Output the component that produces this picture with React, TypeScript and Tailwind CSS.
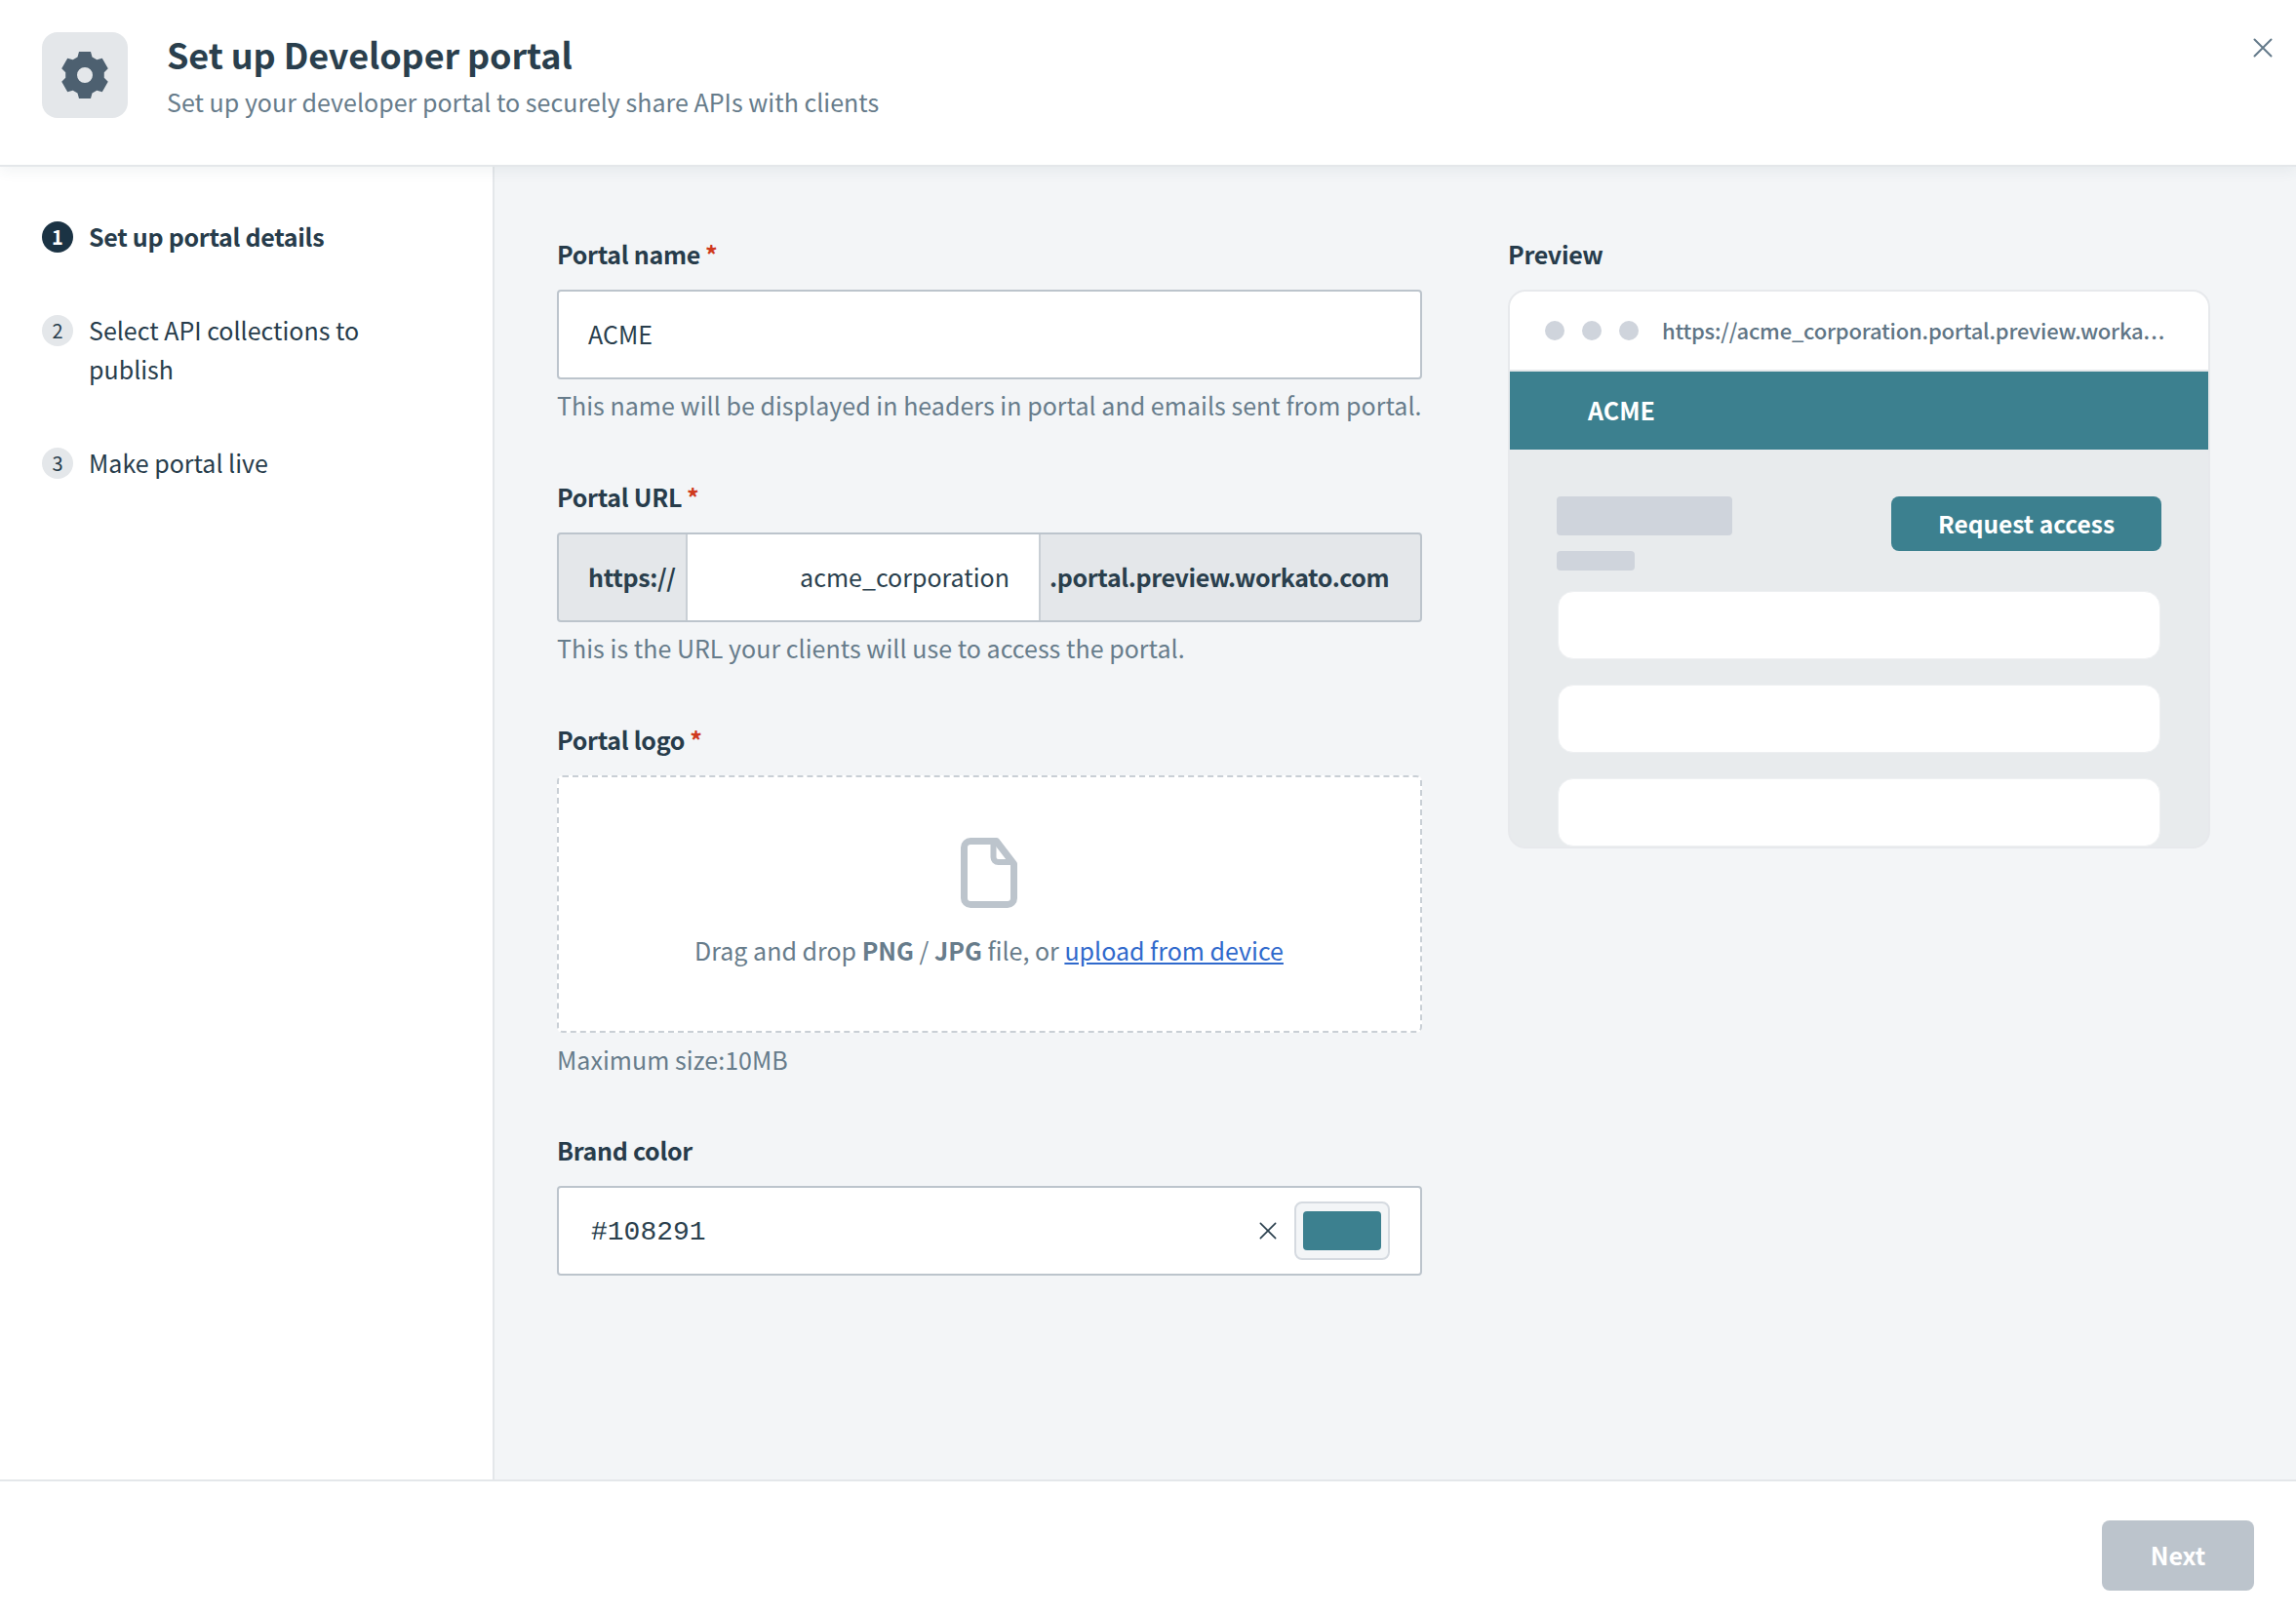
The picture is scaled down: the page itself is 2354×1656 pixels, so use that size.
import React from "react";

function gearPath(cx: number, cy: number) {
  const pts: string[] = [];
  const R = 24;
  const r = 18.5;
  for (let i = 0; i < 6; i++) {
    const a = (-90 + i * 60) * (Math.PI / 180);
    const at = (rad: number, off: number) => {
      const x = cx + rad * Math.cos(a) - off * Math.sin(a);
      const y = cy + rad * Math.sin(a) + off * Math.cos(a);
      return `${x.toFixed(2)} ${y.toFixed(2)}`;
    };
    pts.push(at(r, -7.5), at(R, -6), at(R, 6), at(r, 7.5));
  }
  return `M${pts.join("L")}Z`;
}

function Label({ text, required, className = "" }: { text: string; required?: boolean; className?: string }) {
  return (
    <div className={`h-[40px] leading-[40px] text-[25px] font-semibold tracking-[-0.3px] text-[#273c4b] ${className}`}>
      {text}
      {required && <span className="text-[#cf3a1d] ml-[5px]">*</span>}
    </div>
  );
}

function Hint({ children, className = "" }: { children: React.ReactNode; className?: string }) {
  return <div className={`h-[40px] leading-[40px] text-[25px] tracking-[0.03px] text-[#677c8b] whitespace-nowrap ${className}`}>{children}</div>;
}

function Step({ n, active, children, className = "" }: { n: number; active?: boolean; children: React.ReactNode; className?: string }) {
  return (
    <div className={`flex gap-[16px] ${className}`}>
      <div
        className={`mt-[5px] w-[32px] h-[32px] shrink-0 rounded-full flex items-center justify-center text-[20px] leading-none ${
          active ? "bg-[#1b3344] text-white font-semibold" : "bg-[#e4e7ea] text-[#273c4b]"
        }`}
      >
        {n}
      </div>
      <div className={`text-[25px] leading-[40px] text-[#273c4b] w-[330px] ${active ? "font-semibold tracking-[-0.3px]" : ""}`}>{children}</div>
    </div>
  );
}

function XIcon({ size, color, width }: { size: number; color: string; width: number }) {
  return (
    <svg width={size} height={size} viewBox="0 0 20 20" fill="none" stroke={color} strokeWidth={width} strokeLinecap="round">
      <path d="M1.5 1.5L18.5 18.5M18.5 1.5L1.5 18.5" />
    </svg>
  );
}

export default function App() {
  return (
    <div className="w-[2354px] h-[1656px] flex flex-col bg-white overflow-hidden font-['Noto_Sans_CJK_SC','Noto_Sans',sans-serif] text-[#273c4b]">
      <header className="relative z-10 h-[171px] shrink-0 flex items-start bg-white border-b-2 border-[#e4e7ea] shadow-[0_4px_14px_rgba(60,80,100,0.07)] pl-[43px] pt-[33px]">
        <div className="w-[88px] h-[88px] rounded-[16px] bg-[#e4e7ea] flex items-center justify-center">
          <svg width="48" height="48" viewBox="0 0 48 48">
            <path d={gearPath(24, 24) + "M24 16a8 8 0 1 0 0 16a8 8 0 1 0 0-16Z"} fill="#4d6070" fillRule="evenodd" />
          </svg>
        </div>
        <div className="ml-[40px] -mt-[5px]">
          <div className="text-[36px] leading-[54px] font-bold tracking-[-0.13px] text-[#2a3f4d]">Set up Developer portal</div>
          <div className="text-[25px] leading-[40px] text-[#677c8b] mt-[2px] tracking-[0.02px]">Set up your developer portal to securely share APIs with clients</div>
        </div>
        <button className="absolute right-[24px] top-[39px] w-[20px] h-[20px]">
          <XIcon size={20} color="#647a8a" width={2} />
        </button>
      </header>

      <div className="flex flex-1 min-h-0">
        <aside className="w-[507px] shrink-0 bg-white border-r-2 border-[#e4e7ea] pl-[43px] pt-[51px]">
          <Step n={1} active>Set up portal details</Step>
          <Step n={2} className="mt-[56px]">Select API collections to publish</Step>
          <Step n={3} className="mt-[56px]">Make portal live</Step>
        </aside>

        <main className="flex-1 bg-[#f3f5f7] pl-[64px] pt-[69px] flex gap-[88px]">
          <div className="w-[887px] shrink-0">
            <Label text="Portal name" required className="mb-[17px]" />
            <div className="h-[92px] bg-white border-2 border-[#bcc4cc] rounded-[4px] flex items-center pl-[30px] text-[25px] text-[#2a3f4d]">ACME</div>
            <Hint className="mt-[6px]">This name will be displayed in headers in portal and emails sent from portal.</Hint>

            <Label text="Portal URL" required className="mt-[54px] mb-[17px]" />
            <div className="h-[92px] bg-[#e4e7ea] border-2 border-[#bcc4cc] rounded-[4px] flex items-stretch text-[25px] text-[#2a3f4d]">
              <div className="w-[132px] pl-[30px] flex items-center font-semibold tracking-[-0.33px] border-r-2 border-[#c9cfd5]">https://</div>
              <div className="w-[360px] bg-white flex items-center justify-end pr-[30px]">acme_corporation</div>
              <div className="flex-1 pl-[9px] flex items-center font-semibold tracking-[-0.37px] border-l-2 border-[#c9cfd5]">.portal.preview.workato.com</div>
            </div>
            <Hint className="mt-[6px]">This is the URL your clients will use to access the portal.</Hint>

            <Label text="Portal logo" required className="mt-[54px] mb-[17px]" />
            <div className="h-[264px] bg-white border-2 border-dashed border-[#c9cfd5] rounded-[6px] flex flex-col items-center pt-[62px]">
              <svg width="58" height="72" viewBox="0 0 58 72" fill="none" stroke="#bcc4cc" className="-ml-[2px]">
                <path d="M3.5 10a6.5 6.5 0 0 1 6.5-6.5H36.5L54.5 27V62a6.5 6.5 0 0 1-6.5 6.5H10A6.5 6.5 0 0 1 3.5 62Z" strokeWidth="7" strokeLinejoin="round" />
                <path d="M33.5 5V20a5 5 0 0 0 5 5H54" strokeWidth="6" />
              </svg>
              <div className="mt-[23px] -ml-[1px] h-[40px] leading-[40px] text-[25px] text-[#677c8b] whitespace-nowrap">
                Drag and drop <b className="font-semibold">PNG</b> / <b className="font-semibold">JPG</b> file, or{" "}
                <a className="text-[#2f69cc] underline">upload from device</a>
              </div>
            </div>
            <Hint className="mt-[7px]">Maximum size:10MB</Hint>

            <Label text="Brand color" className="mt-[53px] mb-[17px]" />
            <div className="h-[92px] bg-white border-2 border-[#bcc4cc] rounded-[4px] flex items-center pl-[33px] pr-[31px]">
              <span className="font-['Liberation_Mono',monospace] text-[28px] text-[#2a3f4d] mt-[3px]">#108291</span>
              <span className="ml-auto mr-[18px] flex">
                <XIcon size={18} color="#2a3f4d" width={1.8} />
              </span>
              <div className="w-[98px] h-[60px] bg-[#f3f5f7] border-2 border-[#d5dae0] rounded-[8px] flex items-center justify-center">
                <div className="w-[80px] h-[40px] bg-[#3c808f] rounded-[4px]" />
              </div>
            </div>
          </div>

          <div className="w-[720px] shrink-0">
            <Label text="Preview" className="mb-[17px]" />
            <div className="h-[573px] border-2 border-[#e7e9ec] rounded-[18px] bg-[#e8ebed] overflow-hidden">
              <div className="h-[82px] bg-white border-b-2 border-[#e4e7ea] flex items-center pl-[36px]">
                <div className="flex gap-[18px]">
                  <div className="w-[20px] h-[20px] rounded-full bg-[#cfd4dc]" />
                  <div className="w-[20px] h-[20px] rounded-full bg-[#cfd4dc]" />
                  <div className="w-[20px] h-[20px] rounded-full bg-[#cfd4dc]" />
                </div>
                <div className="ml-[24px] -mt-[2px] whitespace-nowrap text-[22px] font-medium tracking-[-0.2px] text-[#5f7585]">
                  https://acme_corporation.portal.preview.worka<span className="tracking-[1px]">...</span>
                </div>
              </div>
              <div className="h-[80px] bg-[#3c808f] flex items-center pl-[80px] text-[25px] font-bold text-white">ACME</div>
              <div className="pl-[48px] pr-[48px] pt-[48px]">
                <div className="flex justify-between h-[76px]">
                  <div>
                    <div className="w-[180px] h-[40px] bg-[#cfd4dc] rounded-[4px]" />
                    <div className="w-[80px] h-[20px] mt-[16px] bg-[#cfd4dc] rounded-[4px]" />
                  </div>
                  <div className="w-[277px] h-[56px] bg-[#3c808f] rounded-[8px] flex items-center justify-center text-white text-[24.5px] font-semibold">Request access</div>
                </div>
                <div className="mx-[1px] mt-[21px] flex flex-col gap-[26px]">
                  <div className="h-[70px] bg-white rounded-[16px] border border-[#eef0f2]" />
                  <div className="h-[70px] bg-white rounded-[16px] border border-[#eef0f2]" />
                  <div className="h-[70px] bg-white rounded-[16px] border border-[#eef0f2]" />
                </div>
              </div>
            </div>
          </div>
        </main>
      </div>

      <footer className="h-[139px] shrink-0 bg-white border-t-2 border-[#e4e7ea] flex items-start justify-end pr-[43px] pt-[40px]">
        <button className="w-[156px] h-[72px] bg-[#bcc4cc] rounded-[8px] text-white text-[25px] font-semibold">Next</button>
      </footer>
    </div>
  );
}
